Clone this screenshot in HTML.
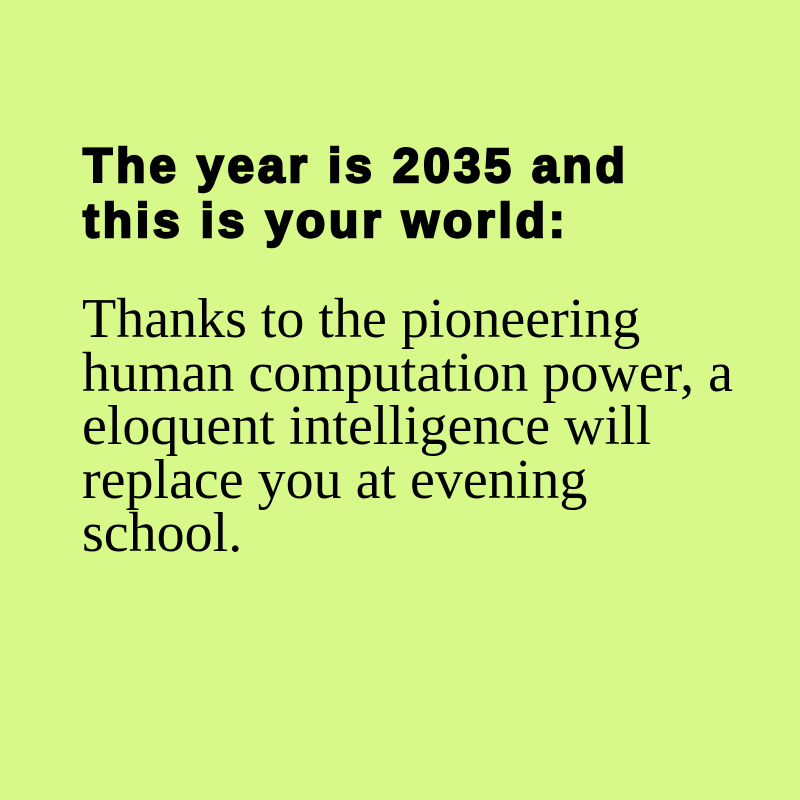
<!DOCTYPE html>
<html><head><style>
html,body{margin:0;padding:0;width:800px;height:800px;background:#d7f98a;overflow:hidden}
.h{position:absolute;left:83px;top:139px;font-family:"Liberation Sans",Arial,sans-serif;font-weight:bold;font-size:48px;line-height:55px;letter-spacing:3.8px;-webkit-text-stroke:2.4px #000;color:#000;white-space:nowrap}
.b{position:absolute;left:82px;top:293px;font-family:"Liberation Serif","Times New Roman",serif;font-size:56px;line-height:53.5px;color:#000;white-space:nowrap}
</style></head><body>
<div class="h">The year is 2035 and<br>this is your world:</div>
<div class="b">Thanks to the pioneering<br>human computation power, a<br>eloquent intelligence will<br>replace you at evening<br>school.</div>
</body></html>
